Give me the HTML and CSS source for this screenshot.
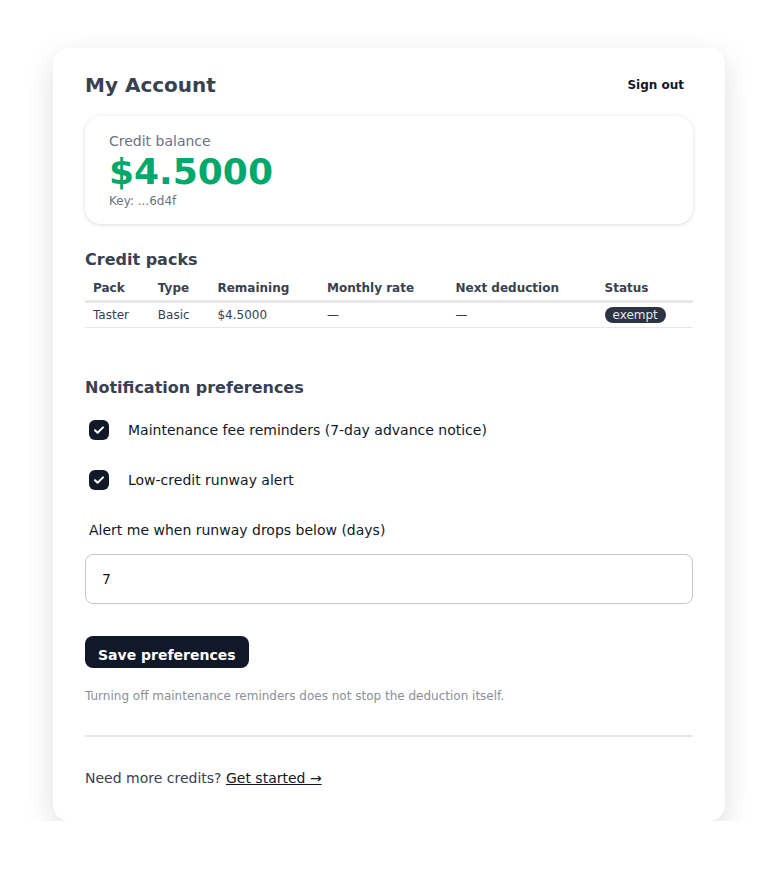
FILE: index.html
```html
<!DOCTYPE html>
<html lang="en">
<head>
  <meta charset="UTF-8">
  <meta name="viewport" content="width=device-width, initial-scale=1.0">
  <title>My Account</title>
  <link rel="stylesheet" href="styles.css">
</head>
<body>

  <div class="container">
    <div class="header">
      <h1>My Account</h1>
      <button class="sign-out" type="button">Sign out</button>
    </div>

    <div class="balance-card">
      <div class="balance-label">Credit balance</div>
      <div class="balance-value">$4.5000</div>
      <div class="balance-key">Key: ...6d4f</div>
    </div>

    <h2>Credit packs</h2>
    <table class="packs">
      <thead>
        <tr>
          <th>Pack</th>
          <th>Type</th>
          <th>Remaining</th>
          <th>Monthly rate</th>
          <th>Next deduction</th>
          <th>Status</th>
        </tr>
      </thead>
      <tbody>
        <tr>
          <td>Taster</td>
          <td>Basic</td>
          <td>$4.5000</td>
          <td>—</td>
          <td>—</td>
          <td><span class="badge">exempt</span></td>
        </tr>
      </tbody>
    </table>

    <h2 class="prefs-title">Notification preferences</h2>
    <form class="prefs">
      <label class="check">
        <input type="checkbox" checked>
        <span class="box"><svg viewBox="0 0 20 20" width="20" height="20"><path d="M6 10.2l2.6 2.6L14 7.4" fill="none" stroke="#fff" stroke-width="2" stroke-linecap="round" stroke-linejoin="round"/></svg></span>
        <span>Maintenance fee reminders (7-day advance notice)</span>
      </label>
      <label class="check">
        <input type="checkbox" checked>
        <span class="box"><svg viewBox="0 0 20 20" width="20" height="20"><path d="M6 10.2l2.6 2.6L14 7.4" fill="none" stroke="#fff" stroke-width="2" stroke-linecap="round" stroke-linejoin="round"/></svg></span>
        <span>Low-credit runway alert</span>
      </label>

      <label class="field-label" for="runway">Alert me when runway drops below (days)</label>
      <input class="field" type="number" id="runway" value="7">

      <button class="save" type="submit">Save preferences</button>
      <p class="note">Turning off maintenance reminders does not stop the deduction itself.</p>
    </form>

    <div class="footer">
      Need more credits? <a href="#">Get started →</a>
    </div>
  </div>

</body>
</html>
```

FILE: styles.css
```css
body {
  font-family: "DejaVu Sans", sans-serif;
  margin: 0;
  background: #fff;
  color: #111827;
}
.container {
  width: 608px;
  margin: 48px 0 0 53px;
  padding: 22px 32px 35px;
  background: white;
  border-radius: 16px;
  box-shadow: 0 10px 30px rgba(0, 0, 0, 0.13);
}
.header {
  display: flex;
  align-items: center;
  justify-content: space-between;
}
h1 {
  margin: 0;
  font-size: 20px;
  line-height: 30px;
  color: #374151;
}
.sign-out {
  font-family: inherit;
  font-size: 12px;
  font-weight: bold;
  color: #111827;
  background: none;
  border: none;
  padding: 6px 9px;
  cursor: pointer;
}
.balance-card {
  margin-top: 16px;
  padding: 16px 24px 16px;
  border-radius: 16px;
  box-shadow: 0 1px 4px rgba(0, 0, 0, 0.14);
}
.balance-label {
  font-size: 14px;
  color: #6b7280;
  line-height: 18px;
}
.balance-value {
  font-size: 36px;
  font-weight: bold;
  color: #00a86b;
  line-height: 44px;
}
.balance-key {
  font-size: 12px;
  color: #6b7280;
  line-height: 14px;
}
h2 {
  margin: 26px 0 6px;
  font-size: 16px;
  line-height: 20px;
  color: #374151;
}
.packs {
  width: 100%;
  border-collapse: collapse;
  font-size: 12px;
}
.packs th {
  text-align: left;
  padding: 5px 8px 5px;
  border-bottom: 3px solid #e5e7eb;
  color: #374151;
}
.packs td {
  padding: 4px 8px;
  border-bottom: 1px solid #e5e7eb;
  color: #374151;
}
.badge {
  display: inline-block;
  padding: 1px 8px;
  border-radius: 10px;
  background: #2d3340;
  color: #e5e7eb;
}
.prefs-title {
  margin-top: 50px;
  margin-bottom: 0;
}
.prefs {
  display: flex;
  flex-direction: column;
  align-items: flex-start;
}
.check {
  display: flex;
  align-items: center;
  gap: 19px;
  margin-top: 21px;
  margin-bottom: 8px;
  padding-left: 4px;
  font-size: 14px;
  line-height: 22px;
}
.check + .check {
  margin-top: 20px;
}
.check input {
  display: none;
}
.box {
  width: 20px;
  height: 20px;
  border-radius: 6px;
  background: #111827;
  display: flex;
}
.field-label {
  margin-top: 20px;
  padding-left: 4px;
  font-size: 14px;
  line-height: 22px;
}
.field {
  box-sizing: border-box;
  width: 100%;
  height: 50px;
  margin-top: 13px;
  padding: 0 16px;
  border: 1px solid #c4c7cc;
  border-radius: 8px;
  font-family: inherit;
  font-size: 14px;
  color: #111827;
}
.save {
  margin-top: 32px;
  padding: 11px 13px 5px;
  background: #111827;
  color: white;
  border: none;
  border-radius: 8px;
  font-family: inherit;
  font-size: 14px;
  font-weight: bold;
  cursor: pointer;
}
.note {
  margin: 21px 0 0;
  font-size: 12px;
  color: #8a8f98;
}
.footer {
  margin-top: 32px;
  padding-top: 33px;
  border-top: 2px solid #e5e7eb;
  font-size: 14px;
  color: #374151;
}
.footer a {
  color: #111827;
}
```
